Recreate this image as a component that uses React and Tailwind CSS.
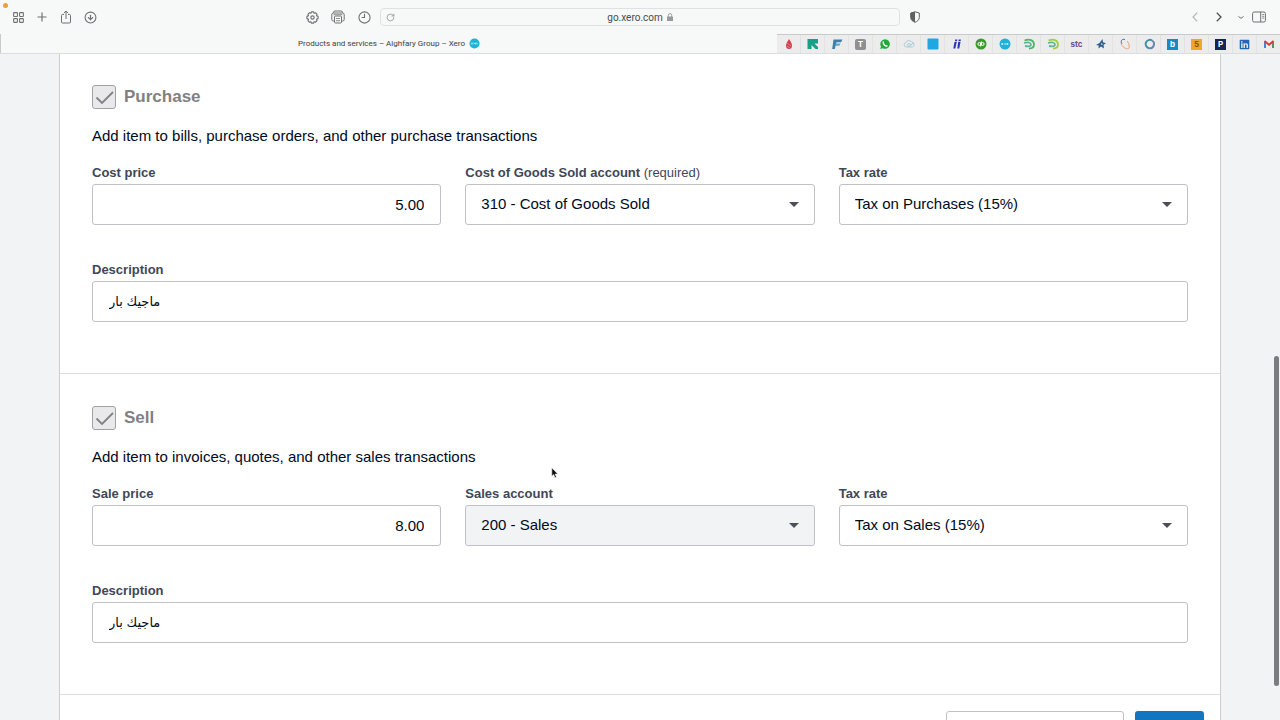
import React from "react";
import { CircleArrowDown, LayoutGrid, Plus, RotateCw } from "lucide-react";
import { FaLinkedin } from "react-icons/fa";

const FAVICONS = [
  {
    name: "Drop",
    art: (
      <>
        <path d="M6 1C7 3 9 5 9 7.500A3 3.500 0 0 1 3 7.500C3 5 5 3 6 1Z" fill="#d5404c" />
        <path d="M4 5l4 3M4 8l3 2" stroke="#f0a0a5" strokeWidth=".6" />
      </>
    ),
  },
  {
    name: "Arrow",
    art: (
      <path d="M.5 1H11V5.500H7.500L11 9V11H8.500L4.500 7V11H.5Z" fill="#16a085" />
    ),
  },
  {
    name: "Flag",
    art: (
      <>
        <path d="M2.500 1.500H11.500L10 4.200H5.500L3.800 11H1.200Z" fill="#3f7fae" />
        <path d="M5 5.500H9.500L8.300 7.800H4.500Z" fill="#63a9b8" />
      </>
    ),
  },
  { name: "T", letter: "T", box: "bg-[#8e8e93] text-white rounded-[2px]" },
  {
    name: "WhatsApp",
    art: (
      <>
        <path d="M6 1.200A4.800 4.800 0 1 1 3.700 10.200L1.200 11 2 8.500A4.800 4.800 0 0 1 6 1.200Z" fill="#23a83c" />
        <path d="M4.200 4C4 6.200 6 8.200 8 8" fill="none" stroke="#fff" strokeWidth="1.400" strokeLinecap="round" />
      </>
    ),
  },
  {
    name: "Cloud",
    art: (
      <g fill="none" stroke="#a9cdda" strokeWidth="1">
        <path d="M3 9a2.300 2.300 0 0 1 0-4.500A3 3 0 0 1 8.500 4 2.600 2.600 0 0 1 9.500 9Z" />
        <circle cx="6" cy="7" r="1.500" />
        <path d="M7 8l3-3" />
      </g>
    ),
  },
  { name: "Square", art: <rect x=".5" y=".5" width="11" height="11" rx="1" fill="#1ea7e1" /> },
  {
    name: "Pair",
    art: (
      <g fill="#2a38b8">
        <path d="M3.500 4H5.800L4.300 10.500H2.300Z" />
        <path d="M7.200 4H9.500L8.300 10.500H6.300Z" />
        <path d="M4.200 1.500H6.300L6 3.200H3.900ZM7.700 1.500H9.900L9.600 3.200H7.400Z" />
      </g>
    ),
  },
  {
    name: "Books",
    art: (
      <>
        <circle cx="6" cy="6" r="5.500" fill="#3c9a2c" />
        <g fill="none" stroke="#fff" strokeWidth="1">
          <circle cx="4.300" cy="6" r="1.400" />
          <circle cx="7.700" cy="6" r="1.400" />
          <path d="M5.600 4.500V8.500M6.400 3.500V7.500" />
        </g>
      </>
    ),
  },
  { name: "Xero", art: <XeroMark /> },
  { name: "Green swirl", art: <GreenSwirl /> },
  { name: "Lime swirl", art: <GreenSwirl lime /> },
  { name: "stc", letter: "stc", box: "text-[#6b4a8f]" },
  {
    name: "Star",
    art: (
      <>
        <path d="M7.500 1L8 4.300 11 5.200 8.500 6.800 9 10.500 6 8.500 3.500 10.500 3.700 7.500 1 7 4.500 5Z" fill="#2d5f92" />
        <path d="M6 5L8 6 6.200 7.200Z" fill="#c7d8e6" />
      </>
    ),
  },
  {
    name: "Ring",
    art: (
      <g fill="none" strokeWidth="1">
        <path d="M6 1.500C3 .5 1 3 3 6" stroke="#51719a" />
        <path d="M2 5C3 9 7 11.500 9.500 10.500 11 9 10 5 8 3" stroke="#e8a171" />
      </g>
    ),
  },
  {
    name: "Globe",
    art: (
      <g fill="none" strokeWidth="2">
        <path d="M9 2.500A4.200 4.200 0 1 0 6 10.200" stroke="#3d92a5" />
        <path d="M6 10.200A4.200 4.200 0 0 0 9 2.500" stroke="#6a87b6" />
      </g>
    ),
  },
  { name: "b", letter: "b", box: "bg-[#148bc4] text-white" },
  { name: "5", letter: "5", box: "bg-[#f0a62a] text-[#8a5310]" },
  { name: "P", letter: "P", box: "bg-[#142458] text-white" },
  { name: "LinkedIn", icon: <FaLinkedin className="size-[11px] text-[#1f67b4]" /> },
  {
    name: "Mail",
    art: (
      <g fill="none" strokeWidth="2">
        <path d="M2 10V3.500" stroke="#4a80d8" />
        <path d="M10 10V3.500" stroke="#4c9b5c" />
        <path d="M1.500 3L6 6.800 10.500 3" stroke="#d93d32" />
      </g>
    ),
  },
];

function XeroMark() {
  return (
    <>
      <circle cx="6" cy="6" r="5.500" fill="#1fb2d6" />
      <path
        d="M2.500 5l1.500 2M4 5L2.500 7M5 6h1.500M7 5v2M8.500 5v2M9.500 6h.5"
        stroke="#c5eef8"
        strokeWidth=".9"
      />
    </>
  );
}

function GreenSwirl({ lime = false }) {
  const outer = lime ? "#a4cf3c" : "#4fb56b";
  return (
    <g fill="none" strokeWidth="1.800">
      <path d="M1.500 2.500C6 .5 11 2 11 6.500 11 9 9 10.500 6 10.500" stroke={outer} />
      <path d="M1 5C5 3.500 8 4.500 8 7 7.500 8.500 5 8.500 2 8" stroke="#59b795" />
    </g>
  );
}

function Favicon({ item }) {
  return (
    <button
      type="button"
      aria-label={item.name}
      className="flex h-full w-6 shrink-0 items-center justify-center border-r border-[#e2e2e3]"
    >
      {item.icon}
      {item.letter && (
        <span
          className={`flex h-[11px] min-w-[11px] items-center justify-center font-['Inter',sans-serif] text-[8px] leading-none font-bold ${item.box}`}
        >
          {item.letter}
        </span>
      )}
      {item.art && (
        <svg viewBox="0 0 12 12" className="size-3">
          {item.art}
        </svg>
      )}
    </button>
  );
}

function ToolButton({ label, children, className = "" }) {
  return (
    <button
      type="button"
      aria-label={label}
      className={`flex size-4 shrink-0 items-center justify-center text-[#6f7072] ${className}`}
    >
      {children}
    </button>
  );
}

function Toolbar() {
  return (
    <div className="relative grid h-[34px] grid-cols-[1fr_520px_1fr] items-center">
      <span className="absolute top-[3px] left-[3px] size-[5px] rounded-full bg-[#e9a23b]" />

      <div className="flex items-center justify-between pr-2 pl-[10px]">
        <div className="flex items-center gap-2">
          <ToolButton label="Tab overview">
            <LayoutGrid size={13} strokeWidth={2} />
          </ToolButton>
          <ToolButton label="New tab">
            <Plus size={14} strokeWidth={2} />
          </ToolButton>
          <ToolButton label="Share">
            <svg viewBox="0 0 14 14" className="size-[14px]" fill="none" stroke="currentColor">
              <path d="M5 4.500H3.500a1 1 0 0 0-1 1V12a1 1 0 0 0 1 1h7a1 1 0 0 0 1-1V5.500a1 1 0 0 0-1-1H9M7 9V1.200M4.800 3.200L7 1l2.200 2.200" />
            </svg>
          </ToolButton>
          <ToolButton label="Downloads">
            <CircleArrowDown size={13} strokeWidth={2} />
          </ToolButton>
        </div>
        <div className="flex items-center gap-[10px]">
          <ToolButton label="Settings">
            <svg
              viewBox="0 0 14 14"
              className="size-[13px]"
              fill="none"
              stroke="currentColor"
              strokeWidth="1.200"
              strokeLinejoin="round"
            >
              <path d="M5.800 1h2.400l.5 1.500 1.500-.6 1.700 1.700-.6 1.500 1.700.7v2.400l-1.700.7.6 1.500-1.700 1.700-1.500-.6-.5 1.500H5.800l-.5-1.500-1.500.6-1.700-1.700.6-1.500L1 8.200V5.800l1.700-.7-.6-1.500 1.700-1.700 1.500.6Z" />
              <circle cx="7" cy="7" r="1.800" />
            </svg>
          </ToolButton>
          <ToolButton label="Print">
            <svg viewBox="0 0 14 14" className="size-[14px]" fill="none" stroke="currentColor">
              <path d="M2.500 3V2.500A1.500 1.500 0 0 1 4 1h6a1.500 1.500 0 0 1 1.500 1.500V3" />
              <path d="M3.500 11H2.300A1.500 1.500 0 0 1 .8 9.500v-5A1.500 1.500 0 0 1 2.300 3h9.400a1.500 1.500 0 0 1 1.500 1.500v5a1.500 1.500 0 0 1-1.500 1.500h-1.200" />
              <rect x="3.500" y="6" width="7" height="7" rx="1" />
              <path d="M2.500 4.700h9M5 8.500h4M5 10.700h4" strokeWidth=".8" />
            </svg>
          </ToolButton>
          <ToolButton label="History">
            <svg viewBox="0 0 14 14" className="size-[13px]" fill="none" stroke="currentColor" strokeWidth="1.200">
              <circle cx="7" cy="7" r="6" />
              <path d="M7 3v4H4" />
            </svg>
          </ToolButton>
        </div>
      </div>

      <div className="flex h-[18px] items-center rounded border border-[#dfe1e2] px-[3px]">
        <ToolButton label="Reload" className="w-3 text-[#8d8e90]">
          <RotateCw size={9} strokeWidth={2} />
        </ToolButton>
        <div className="flex flex-1 items-center justify-center gap-1 pr-3 font-['Roboto',sans-serif] text-[10px] text-[#4a4b4d]">
          <span>go.xero.com</span>
          <svg viewBox="0 0 6 8" className="h-2 w-[6px]">
            <rect y="3.500" width="6" height="4.500" rx=".6" fill="#98999b" />
            <path d="M1.300 4V2.300a1.700 1.700 0 0 1 3.400 0V4" fill="none" stroke="#98999b" strokeWidth=".9" />
          </svg>
        </div>
      </div>

      <div className="flex items-center justify-between pr-[13px] pl-[7px]">
        <ToolButton label="Privacy report">
          <svg viewBox="0 0 10 12" className="h-3 w-[10px]">
            <path d="M5 .8L9.300 2v4.500C9.300 9 7 10.500 5 11.300 3 10.500.7 9 .7 6.500V2Z" fill="none" stroke="#5f6062" />
            <path d="M5 .8V11.300C3 10.500.7 9 .7 6.500V2Z" fill="#5f6062" />
          </svg>
        </ToolButton>
        <div className="flex items-center">
          <ToolButton label="Back">
            <svg viewBox="0 0 6 10" className="h-[10px] w-[6px]" fill="none" stroke="#b4b5b7" strokeWidth="1.200">
              <path d="M5.200.7L1 5l4.200 4.300" />
            </svg>
          </ToolButton>
          <ToolButton label="Forward" className="ml-2">
            <svg viewBox="0 0 6 10" className="h-[10px] w-[6px]" fill="none" stroke="#505153" strokeWidth="1.300">
              <path d="M.8.7L5 5 .8 9.300" />
            </svg>
          </ToolButton>
          <ToolButton label="Tab groups" className="ml-[6px]">
            <svg viewBox="0 0 6 3" className="h-[3px] w-[6px]" fill="none" stroke="currentColor">
              <path d="M.5.5L3 2.300 5.500.5" />
            </svg>
          </ToolButton>
          <ToolButton label="Sidebar" className="ml-[2px]">
            <svg viewBox="0 0 14 12" className="h-3 w-[14px] shrink-0" fill="none" stroke="currentColor">
              <rect x=".6" y="1" width="12.800" height="10" rx="1.500" />
              <path d="M8.700 1v10" />
              <path d="M10.200 3.500h2M10.200 5.300h2M10.200 7.100h2" strokeWidth=".8" />
            </svg>
          </ToolButton>
        </div>
      </div>
    </div>
  );
}

function TabBar() {
  return (
    <div className="flex h-5 overflow-hidden border-b border-[#dcddde]">
      <div className="flex flex-1 items-center justify-center gap-1 border-l border-[#c9cacb] font-['Roboto',sans-serif] text-[8px] text-[#3f4042]">
        <span className="whitespace-nowrap">Products and services – Alghfary Group – Xero</span>
        <svg viewBox="0 0 12 12" className="size-[11px]">
          <XeroMark />
        </svg>
      </div>
      <div className="flex w-[503px] overflow-hidden border-t border-[#c9cacb] bg-[#ececed]">
        {FAVICONS.map((item) => (
          <Favicon key={item.name} item={item} />
        ))}
      </div>
    </div>
  );
}

function Field({ id, label, note, children }) {
  return (
    <div className="flex flex-col gap-px">
      <label htmlFor={id} className="text-[13px] leading-5 font-bold text-[#404756]">
        {label}
        {note && <span className="font-normal"> {note}</span>}
      </label>
      {children}
    </div>
  );
}

function TextInput({ id, value, className = "text-[15px]" }) {
  return (
    <input
      id={id}
      type="text"
      defaultValue={value}
      className={`h-[41px] w-full rounded-[3px] border border-[#bfc1c5] bg-white px-4 text-[#000a1e] ${className}`}
    />
  );
}

function SelectInput({ id, value, disabled = false }) {
  return (
    <div className="relative">
      <select
        id={id}
        disabled={disabled}
        className="block h-[41px] w-full appearance-none rounded-[3px] border border-[#bfc1c5] bg-white px-[15px] text-[15px] text-[#000a1e] opacity-100 disabled:bg-[#f2f3f4]"
      >
        <option>{value}</option>
      </select>
      <svg
        viewBox="0 0 10 5"
        className="pointer-events-none absolute top-[18px] right-4 h-[5px] w-[10px]"
        fill="#4a4f5a"
      >
        <path d="M0 0H10L5 5Z" />
      </svg>
    </div>
  );
}

function ItemSection({ id, title, intro, priceLabel, price, accountLabel, accountNote, account, accountDisabled, tax, description }) {
  return (
    <section className="border-b border-[#dcdde0] px-8 pt-8 pb-[51px]">
      <div className="flex items-center gap-2">
        <span className="relative size-6">
          <input
            id={`${id}-enabled`}
            type="checkbox"
            defaultChecked
            disabled
            className="block size-6 appearance-none rounded-[3px] border border-[#a0a1a4] bg-[#e9e9eb]"
          />
          <svg
            viewBox="0 0 24 24"
            className="pointer-events-none absolute inset-0 size-6"
            fill="none"
            stroke="#808184"
            strokeWidth="1.800"
          >
            <path d="M4.500 12.500L10 18 21 7" />
          </svg>
        </span>
        <label htmlFor={`${id}-enabled`} className="text-[17px] leading-6 font-bold text-[#808184]">
          {title}
        </label>
      </div>

      <p className="mt-[15px] text-[15px] leading-6 text-[#000a1e]">{intro}</p>

      <div className="mt-[15px] grid grid-cols-3 gap-6">
        <Field id={`${id}-price`} label={priceLabel}>
          <TextInput id={`${id}-price`} value={price} className="text-right text-[15px]" />
        </Field>
        <Field id={`${id}-account`} label={accountLabel} note={accountNote}>
          <SelectInput id={`${id}-account`} value={account} disabled={accountDisabled} />
        </Field>
        <Field id={`${id}-tax`} label="Tax rate">
          <SelectInput id={`${id}-tax`} value={tax} />
        </Field>
      </div>

      <div className="mt-[35px]">
        <Field id={`${id}-description`} label="Description">
          <TextInput id={`${id}-description`} value={description} className="text-[13px]" />
        </Field>
      </div>
    </section>
  );
}

export default function App() {
  return (
    <div className="relative flex h-screen flex-col overflow-hidden bg-[#f1f3f5] font-['Liberation_Sans','DejaVu_Sans',sans-serif]">
      <header className="relative z-10 shrink-0 bg-[#f7f8f8]">
        <Toolbar />
        <TabBar />
      </header>

      <main className="mx-[59px] -mt-px min-h-0 flex-1 overflow-hidden">
        <div className="border-x border-[#cbcdd0] bg-white">
          <ItemSection
            id="purchase"
            title="Purchase"
            intro="Add item to bills, purchase orders, and other purchase transactions"
            priceLabel="Cost price"
            price="5.00"
            accountLabel="Cost of Goods Sold account"
            accountNote="(required)"
            account="310 - Cost of Goods Sold"
            tax="Tax on Purchases (15%)"
            description="ماجيك بار"
          />
          <ItemSection
            id="sell"
            title="Sell"
            intro="Add item to invoices, quotes, and other sales transactions"
            priceLabel="Sale price"
            price="8.00"
            accountLabel="Sales account"
            account="200 - Sales"
            accountDisabled
            tax="Tax on Sales (15%)"
            description="ماجيك بار"
          />
          <footer className="flex justify-end gap-[11px] p-4">
            <button
              type="button"
              aria-label="Cancel"
              className="h-10 w-[178px] rounded-[3px] border border-[#bfc1c5] bg-white"
            />
            <button type="button" aria-label="Save" className="h-10 w-[69px] rounded-[3px] bg-[#1275c0]" />
          </footer>
        </div>
      </main>

      {/* Overlay scrollbar */}
      <div className="absolute top-[356px] right-px h-[330px] w-[5px] rounded-full bg-[#7b7c7f]" />

      {/* Mouse pointer */}
      <svg viewBox="0 0 8 12" className="pointer-events-none absolute top-[467px] left-[551px] h-3 w-2">
        <path
          d="M.8.8V9.200L2.700 7.500 4 10.800 5.400 10.200 4.100 7H6.800Z"
          fill="#111"
          stroke="#fff"
          strokeWidth=".5"
        />
      </svg>
    </div>
  );
}
